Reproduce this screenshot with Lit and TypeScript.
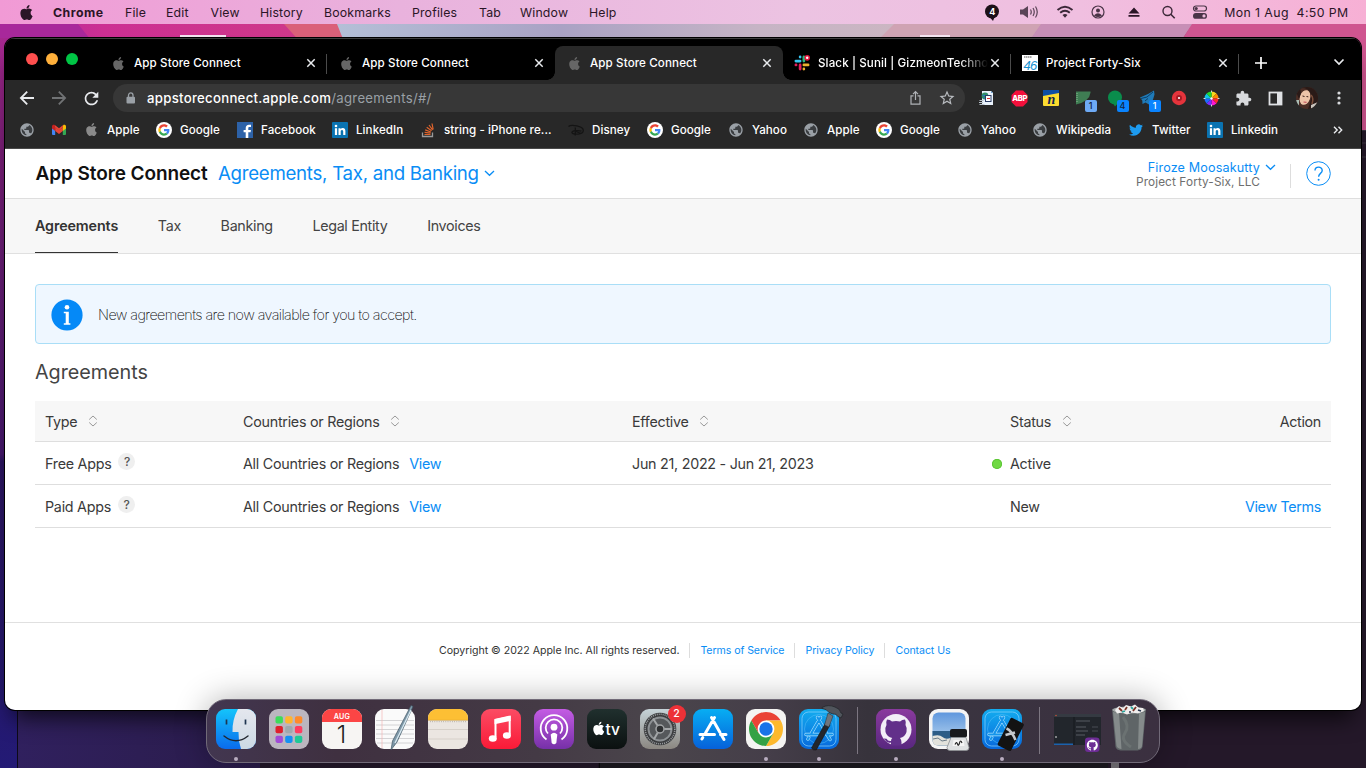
import { LitElement, html, svg, css } from "lit";
import { customElement } from "lit/decorators.js";

const APPLE = "M12.152 6.896c-.948 0-2.415-1.078-3.96-1.04-2.04.027-3.91 1.183-4.961 3.014-2.117 3.675-.546 9.103 1.519 12.09 1.013 1.454 2.208 3.09 3.792 3.039 1.52-.065 2.09-.987 3.935-.987 1.831 0 2.35.987 3.96.948 1.637-.026 2.676-1.48 3.676-2.948 1.156-1.688 1.636-3.325 1.662-3.415-.039-.013-3.182-1.221-3.22-4.857-.026-3.04 2.48-4.494 2.597-4.559-1.429-2.09-3.623-2.324-4.39-2.376-2-.156-3.675 1.09-4.61 1.09zM15.53 3.83c.843-1.012 1.4-2.427 1.245-3.83-1.207.052-2.662.805-3.532 1.818-.78.896-1.454 2.338-1.273 3.714 1.338.104 2.715-.688 3.559-1.701";
const GITHUB = "M12 .297c-6.63 0-12 5.373-12 12 0 5.303 3.438 9.8 8.205 11.385.6.113.82-.258.82-.577 0-.285-.01-1.04-.015-2.04-3.338.724-4.042-1.61-4.042-1.61C4.422 18.07 3.633 17.7 3.633 17.7c-1.087-.744.084-.729.084-.729 1.205.084 1.838 1.236 1.838 1.236 1.07 1.835 2.809 1.305 3.495.998.108-.776.417-1.305.76-1.605-2.665-.3-5.466-1.332-5.466-5.93 0-1.31.465-2.38 1.235-3.22-.135-.303-.54-1.523.105-3.176 0 0 1.005-.322 3.3 1.23.96-.267 1.98-.399 3-.405 1.02.006 2.04.138 3 .405 2.28-1.552 3.285-1.23 3.285-1.23.645 1.653.24 2.873.12 3.176.765.84 1.23 1.91 1.23 3.22 0 4.61-2.805 5.625-5.475 5.92.42.36.81 1.096.81 2.22 0 1.606-.015 2.896-.015 3.286 0 .315.21.69.825.57C20.565 22.092 24 17.592 24 12.297c0-6.627-5.373-12-12-12";
const BIRD = "M23.953 4.57a10 10 0 01-2.825.775 4.958 4.958 0 002.163-2.723c-.951.555-2.005.959-3.127 1.184a4.92 4.92 0 00-8.384 4.482C7.69 8.095 4.067 6.13 1.64 3.162a4.822 4.822 0 00-.666 2.475c0 1.71.87 3.213 2.188 4.096a4.904 4.904 0 01-2.228-.616v.06a4.923 4.923 0 003.946 4.827 4.996 4.996 0 01-2.212.085 4.936 4.936 0 004.604 3.417 9.867 9.867 0 01-6.102 2.105c-.39 0-.779-.023-1.17-.067a13.995 13.995 0 007.557 2.209c9.053 0 13.998-7.496 13.998-13.985 0-.21 0-.42-.015-.63A9.935 9.935 0 0024 4.59z";
const GLOBE = "M12 2C6.48 2 2 6.48 2 12s4.48 10 10 10 10-4.48 10-10S17.52 2 12 2zm-1 17.93c-3.95-.49-7-3.85-7-7.93 0-.62.08-1.21.21-1.79L9 15v1c0 1.1.9 2 2 2v1.93zm6.9-2.54c-.26-.81-1-1.39-1.9-1.39h-1v-3c0-.55-.45-1-1-1H8v-2h2c.55 0 1-.45 1-1V7h2c1.1 0 2-.9 2-2v-.41c2.93 1.19 5 4.06 5 7.41 0 2.08-.8 3.97-2.1 5.39z";
const STAR = "M22 9.24l-7.19-.62L12 2 9.19 8.63 2 9.24l5.46 4.73L5.82 21 12 17.27 18.18 21l-1.63-7.03L22 9.24zM12 15.4l-3.76 2.27 1-4.28-3.32-2.88 4.38-.38L12 6.1l1.71 4.04 4.38.38-3.32 2.88 1 4.28L12 15.4z";
const PUZZLE = "M20.5 11H19V7c0-1.1-.9-2-2-2h-4V3.5C13 2.12 11.88 1 10.5 1S8 2.12 8 3.5V5H4c-1.1 0-1.99.9-1.99 2v3.8H3.5c1.49 0 2.7 1.21 2.7 2.7s-1.21 2.7-2.7 2.7H2V20c0 1.1.9 2 2 2h3.8v-1.5c0-1.49 1.21-2.7 2.7-2.7 1.49 0 2.7 1.21 2.7 2.7V22H17c1.1 0 2-.9 2-2v-4h1.5c1.38 0 2.5-1.12 2.5-2.5S21.88 11 20.5 11z";
const RELOAD = "M17.65 6.35C16.2 4.9 14.21 4 12 4c-4.42 0-7.99 3.58-7.99 8s3.57 8 7.99 8c3.73 0 6.84-2.55 7.73-6h-2.08c-.82 2.33-3.04 4-5.65 4-3.31 0-6-2.69-6-6s2.69-6 6-6c1.66 0 3.14.69 4.22 1.78L13 11h7V4l-2.35 2.35z";

const icon = (size: number, box: string, body: unknown) =>
  html`<svg width=${size} height=${size} viewBox=${box}>${body}</svg>`;

const appleIcon = (fill: string, size = 14) =>
  icon(size, "0 0 24 24", svg`<path fill=${fill} d=${APPLE}></path>`);

const globeIcon = () =>
  icon(16, "0 0 24 24", svg`<circle cx="12" cy="12" r="9" fill="#3a3d40"></circle><path fill="#9aa0a6" d=${GLOBE}></path>`);

const googleIcon = () =>
  icon(16, "-10 -10 68 68", svg`
    <circle cx="24" cy="24" r="34" fill="#fff"></circle>
    <path fill="#EA4335" d="M24 9.5c3.54 0 6.71 1.22 9.21 3.6l6.85-6.85C35.9 2.38 30.47 0 24 0 14.62 0 6.51 5.38 2.56 13.22l7.98 6.19C12.43 13.72 17.74 9.5 24 9.5z"></path>
    <path fill="#4285F4" d="M46.98 24.55c0-1.57-.15-3.09-.38-4.55H24v9.02h12.94c-.58 2.96-2.26 5.48-4.78 7.18l7.73 6c4.51-4.18 7.09-10.36 7.09-17.65z"></path>
    <path fill="#FBBC05" d="M10.53 28.59c-.48-1.45-.76-2.99-.76-4.59s.27-3.14.76-4.59l-7.98-6.19C.92 16.46 0 20.12 0 24c0 3.88.92 7.54 2.56 10.78l7.97-6.19z"></path>
    <path fill="#34A853" d="M24 48c6.48 0 11.93-2.13 15.89-5.81l-7.73-6c-2.15 1.45-4.92 2.3-8.16 2.3-6.26 0-11.57-4.22-13.47-9.91l-7.98 6.19C6.51 42.62 14.62 48 24 48z"></path>`);

const gmailIcon = () =>
  icon(16, "0 0 16 16", svg`
    <path d="M1 4.5h3.2V13H2a1 1 0 0 1-1-1z" fill="#4285f4"></path>
    <path d="M11.800 4.500H15V12a1 1 0 0 1-1 1h-2.200z" fill="#34a853"></path>
    <path d="M4.200 5.300V9L8 11.900 11.800 9V5.300L8 8.200z" fill="#ea4335"></path>
    <path d="M11.800 5.300V9L15 6.500V4.400c0-1.600-1.700-2.200-2.800-1.300z" fill="#fbbc04"></path>
    <path d="M1 4.400V6.500L4.200 9V5.300l-.4-2.200C2.700 2.200 1 2.800 1 4.400z" fill="#c5221f"></path>
    <path d="M3.800 3.100L8 6.300l4.200-3.200-.4 2.200L8 8.600 4.200 5.600z" fill="#ea4335"></path>`);

const facebookIcon = () =>
  icon(16, "0 0 16 16", svg`<rect width="16" height="16" fill="#2d62a8"></rect><path fill="#fff" d="M8.700 16v-5.700H6.600V8h2.100V6.300c0-2.200 1.200-3.500 3.300-3.500h2V5h-1.400c-1 0-1.300.5-1.300 1.300V8h2.600l-.3 2.300h-2.300V16z"></path>`);

const linkedinIcon = () =>
  icon(16, "0 0 16 16", svg`<rect width="16" height="16" rx="1" fill="#0a73b1"></rect><circle cx="4" cy="4" r="1.300" fill="#fff"></circle><path fill="#fff" d="M2.900 6.200h2.200v6.900H2.900zM6.500 6.200h2.100v1c.5-.8 1.200-1.200 2.200-1.200 2 0 2.600 1.300 2.600 3.300v3.800h-2.200V9.700c0-1-.2-1.800-1.200-1.800s-1.300.8-1.300 1.800v3.400H6.500z"></path>`);

const stackIcon = () =>
  icon(16, "0 0 16 16", svg`<path d="M2.500 10.500v4h10v-4" fill="none" stroke="#9a9a9a" stroke-width="1.300"></path><path d="M4.500 12.500h6M4.600 10.300l6 .9M5.200 7.900l5.600 2.100M6.700 5.300l4.900 3.500M9 3l3.600 4.900M12 1.500l1.200 6" stroke="#e0642c" stroke-width="1.200" fill="none"></path>`);

const disneyIcon = () =>
  icon(16, "0 0 16 16", svg`<path d="M.5 4.500C3 2 15.500 4 15.300 8.500c-.2 4.500-10.500 4.500-11.300 2-.5-1.800 6-2.600 9.500-1.300M7.300 5.500v8M8 9.500l5 2" fill="none" stroke="#141414" stroke-width="1.300"></path>`);

const birdIcon = () => icon(14, "0 0 24 24", svg`<path fill="#1d9bf0" d=${BIRD}></path>`);

const slackIcon = () =>
  icon(16, "0 0 17 17", svg`
    <g stroke-width="2.900" stroke-linecap="round">
      <path d="M2 6.500h4.500M6.500 2v.2" stroke="#36c5f0"></path>
      <path d="M10.500 2v4.500" stroke="#2eb67d"></path>
      <path d="M10.500 10.500H15M10.500 15v-.2" stroke="#ecb22e"></path>
      <path d="M6.500 10.500V15M2 10.500h.2" stroke="#e01e5a"></path>
    </g>
    <circle cx="14" cy="3" r="3" fill="#e5153d"></circle><circle cx="14" cy="3" r="1.300" fill="#fff"></circle>`);

const fortySixIcon = () =>
  icon(16, "0 0 16 16", svg`<rect width="16" height="16" fill="#fff"></rect><path d="M2 2h8" stroke="#555" stroke-width="1.200" stroke-dasharray="1.500 .5"></path>
    <text x="1.500" y="14.500" font-family="Liberation Sans" font-style="italic" font-size="13" letter-spacing="-.8" fill="#1791cf">46</text>`);

const closeIcon = () =>
  icon(10, "0 0 10 10", svg`<path d="M1.300 1.300l7.400 7.400M8.700 1.300L1.300 8.700" stroke="#e8eaed" stroke-width="1.500"></path>`);

@customElement("mac-menubar")
class MacMenubar extends LitElement {
  static styles = css`
    :host { display: flex; align-items: center; height: 24px; box-sizing: border-box; padding-left: 19px;
      background: linear-gradient(90deg, #f19ad5 0, #e9b2dd 400px, #ecc3e2 800px, #f0bfe0 1080px, #f7b0d5 100%);
      font: 400 12.300px Inter, "Liberation Sans", sans-serif; color: #2a1526; }
    .menus { display: grid; grid-template-columns: 34px 72px 41px 44.500px 49.500px 64px 88px 67px 41px 69px 40px; align-items: center; white-space: nowrap; letter-spacing: 0.170px; }
    .app { font-weight: 700; letter-spacing: 0.500px; }
    .extras { margin-left: auto; display: grid; grid-template-columns: 36px 37px 34px 35.500px 35px 31.500px 28px 132px; align-items: center; padding-right: 14px; white-space: nowrap; }
    .clock { justify-self: end; margin-right: 3.500px; letter-spacing: 0.400px; }
    svg { display: block; }
    .count { font: 700 9px Inter, sans-serif; letter-spacing: 0; }
  `;
  render() {
    const names = ["File", "Edit", "View", "History", "Bookmarks", "Profiles", "Tab", "Window", "Help"];
    return html`
      <div class="menus">
        ${appleIcon("#2a1526", 15)}
        <span class="app">Chrome</span>
        ${names.map((n) => html`<span>${n}</span>`)}
      </div>
      <div class="extras">
        ${icon(18, "0 0 18 18", svg`<circle cx="9" cy="8.500" r="7" fill="#1c1019"></circle><path d="M7.500 15l2.500 3 1.600-4z" fill="#1c1019"></path><text class="count" x="6.200" y="11.700" fill="#fff">4</text>`)}
        ${icon(20, "0 0 20 20", svg`<path d="M1 7.500h3L9 4v12l-5-3.500H1z" fill="#5a4457"></path><path d="M11.500 7.500q1.500 2.500 0 5M14 6q2.500 4 0 8M16.500 4.500q3.500 5.500 0 11" fill="none" stroke="#5a4457" stroke-width="1.200"></path>`)}
        ${icon(18, "0 0 18 18", svg`<path d="M1.500 7q7.500-6.500 15 0M4.200 9.800q4.800-4 9.600 0" fill="none" stroke="#3c2839" stroke-width="1.900"></path><path d="M6.500 12q2.500-2 5 0L9 14.800z" fill="#3c2839"></path>`)}
        ${icon(16, "0 0 16 16", svg`<circle cx="8" cy="8" r="6" fill="none" stroke="#4a3447" stroke-width="1.200"></circle><circle cx="8" cy="6.500" r="2" fill="#4a3447"></circle><path d="M4 11.500q4-4.500 8 0-4 3-8 0z" fill="#4a3447"></path>`)}
        ${icon(16, "0 0 16 16", svg`<path d="M8 3.500l5.500 6h-11zM2.500 11h11v1.800h-11z" fill="#2a1526"></path>`)}
        ${icon(15, "0 0 15 15", svg`<circle cx="6.500" cy="6" r="4.500" fill="none" stroke="#3c2839" stroke-width="1.400"></circle><path d="M9.800 9.300L13.700 13.300" stroke="#3c2839" stroke-width="1.600"></path>`)}
        ${icon(16, "0 0 16 16", svg`<rect x="1.500" y="2" width="13" height="5" rx="2.500" fill="none" stroke="#4a3447" stroke-width="1.200"></rect><circle cx="4.200" cy="4.500" r="1.600" fill="#4a3447"></circle><rect x="1" y="9" width="14" height="5.800" rx="2.900" fill="#4a3447"></rect><circle cx="12" cy="11.900" r="1.600" fill="#eebbdc"></circle>`)}
        <span class="clock">Mon 1 Aug&nbsp; 4:50 PM</span>
      </div>`;
  }
}

interface Tab { title: string; icon: () => unknown; active?: boolean; line?: boolean; fade?: boolean }

@customElement("browser-chrome")
class BrowserChrome extends LitElement {
  static styles = css`
    :host { display: flex; flex-direction: column; background: #282828; color: #fff; border-bottom: 1px solid #4a4a4a; box-sizing: border-box; height: 111px;
      font: 500 11.600px Inter, "Liberation Sans", sans-serif; }
    svg { display: block; }
    .strip { display: flex; height: 42px; background: #000; align-items: flex-end; box-sizing: border-box; border-top: 1px solid #3d3d3d; }
    .lights { display: flex; gap: 8px; padding: 0 0 15px 21px; width: 72.500px; }
    .light { width: 12px; height: 12px; border-radius: 50%; }
    .red { background: #ff4f4e; } .yellow { background: #ffb03b; } .green { background: #00c545; }
    .tab { display: grid; grid-template-columns: 16px 179.500px 10px; align-items: center; justify-items: center; width: 228px; height: 34px; padding-left: 11.500px; box-sizing: border-box; position: relative; white-space: nowrap; }
    .title { justify-self: start; padding-left: 8px; letter-spacing: 0.110px; line-height: 16px; }
    .fade { -webkit-mask-image: linear-gradient(90deg, #000 150px, transparent 178px); mask-image: linear-gradient(90deg, #000 150px, transparent 178px); }
    .active { background: #282828; border-radius: 8px 8px 0 0; }
    .active::before, .active::after { content: ""; position: absolute; bottom: 0; width: 8px; height: 8px; }
    .active::before { left: -8px; background: radial-gradient(circle at 0 0, transparent 7.500px, #282828 8px); }
    .active::after { right: -8px; background: radial-gradient(circle at 100% 0, transparent 7.500px, #282828 8px); }
    .line::after { content: ""; position: absolute; right: 0; top: 8px; width: 1px; height: 20px; background: #4b4b4b; }
    .plus { padding: 0 0 11px 16px; }
    .more { margin-left: auto; padding: 0 16px 12px 0; }
    .toolbar { display: flex; align-items: center; height: 36px; padding-left: 14px; }
    .nav { display: flex; align-items: center; gap: 16px; width: 94px; }
    .omni { display: flex; align-items: center; box-sizing: border-box; width: 852px; height: 28px; padding: 0 9px 0 12px; background: #373737; border-radius: 14px; }
    .url { margin-left: 10px; font-size: 13.200px; font-weight: 500; letter-spacing: 0.280px; white-space: nowrap; }
    .path { color: #9aa0a6; font-weight: 400; }
    .omni-end { margin-left: auto; display: flex; gap: 14px; align-items: center; }
    .exts { display: grid; grid-template-columns: repeat(12, 32px); margin-left: 6px; justify-items: center; align-items: center; }
    .ext { position: relative; }
    .badge { position: absolute; left: 10px; top: 10px; width: 12px; height: 12px; border-radius: 2px; background: #0a84ff; color: #14243c; font-size: 9px; line-height: 12px; text-align: center; }
    .pale { background: #6eaaf5; } .white { color: #fff; }
    .marks { display: grid; grid-template-columns: 32px 32px 73px 81px 95px 88px 148px 79px 81px 75px 73px 81px 75px 96px 79px 1fr; height: 27px; padding-left: 14px; align-items: center; white-space: nowrap; letter-spacing: 0.060px; }
    .mark { display: grid; grid-template-columns: 16px auto; justify-content: start; column-gap: 8px; align-items: center; justify-items: center; }
    .bar { display: flex; align-items: center; }
    .chev { margin-left: auto; padding-right: 18px; }
  `;
  render() {
    const tabApple = () => appleIcon("#666", 13);
    const tabs: Tab[] = [
      { title: "App Store Connect", icon: tabApple, line: true },
      { title: "App Store Connect", icon: tabApple },
      { title: "App Store Connect", icon: tabApple, active: true },
      { title: "Slack | Sunil | GizmeonTechno", icon: slackIcon, line: true, fade: true },
      { title: "Project Forty-Six", icon: fortySixIcon, line: true },
    ];
    const marks: [() => unknown, string][] = [
      [globeIcon, ""], [gmailIcon, ""], [() => appleIcon("#8a8a8a", 13), "Apple"], [googleIcon, "Google"],
      [facebookIcon, "Facebook"], [linkedinIcon, "LinkedIn"], [stackIcon, "string - iPhone re..."],
      [disneyIcon, "Disney"], [googleIcon, "Google"], [globeIcon, "Yahoo"], [globeIcon, "Apple"],
      [googleIcon, "Google"], [globeIcon, "Yahoo"], [globeIcon, "Wikipedia"], [birdIcon, "Twitter"],
      [linkedinIcon, "Linkedin"],
    ];
    return html`
      <div class="strip">
        <div class="lights"><span class="light red"></span><span class="light yellow"></span><span class="light green"></span></div>
        ${tabs.map((t) => html`<div class="tab ${t.active ? "active" : ""} ${t.line ? "line" : ""}">${t.icon()}<span class="title ${t.fade ? "fade" : ""}">${t.title}</span>${closeIcon()}</div>`)}
        <div class="plus">${icon(12, "0 0 12 12", svg`<path d="M6 0v12M0 6h12" stroke="#fff" stroke-width="1.700"></path>`)}</div>
        <div class="more">${icon(12, "0 0 12 12", svg`<path d="M1.500 3.500L6 8l4.500-4.500" fill="none" stroke="#e8eaed" stroke-width="1.700"></path>`)}</div>
      </div>
      <div class="toolbar">
        <div class="nav">
          ${icon(16, "0 0 16 16", svg`<path d="M15 8H2M8.200 1.700L1.900 8l6.300 6.300" fill="none" stroke="#e8eaed" stroke-width="1.800"></path>`)}
          ${icon(16, "0 0 16 16", svg`<path d="M1 8h13M7.800 1.700L14.100 8l-6.300 6.300" fill="none" stroke="#707274" stroke-width="1.800"></path>`)}
          ${icon(17, "2 2 20 20", svg`<path fill="#e8eaed" d=${RELOAD}></path>`)}
        </div>
        <div class="omni">
          ${icon(12, "0 0 12 12", svg`<rect x="1.500" y="4.800" width="8.500" height="6.700" rx="1" fill="#9aa0a6"></rect><path d="M3.500 5V3.200a2.250 2.250 0 0 1 4.500 0V5" fill="none" stroke="#9aa0a6" stroke-width="1.300"></path>`)}
          <span class="url">appstoreconnect.apple.com<span class="path">/agreements/#/</span></span>
          <div class="omni-end">
            ${icon(16, "0 0 16 16", svg`<path d="M5.500 5.800H3v8.400h9V5.800H9.500M7.500 10V1.800M5 4.200l2.500-2.600L10 4.200" fill="none" stroke="#b0b3b7" stroke-width="1.200"></path>`)}
            ${icon(18, "0 0 24 24", svg`<path fill="#b8bbbf" d=${STAR}></path>`)}
          </div>
        </div>
        <div class="exts">
          ${icon(16, "0 0 16 16", svg`<path d="M3 1h9l2 2v12H3z" fill="#e9f2fb"></path><path d="M12 1l2 2h-2z" fill="#6fa3d6"></path><circle cx="6" cy="6" r="3.400" fill="#2f8f6a"></circle><path d="M3.500 5.500h3M4.500 8h3" stroke="#2871c8"></path><rect x="6.500" y="5.500" width="5.500" height="6" fill="#fff" stroke="#2c3e66"></rect><path d="M8 8.500h3" stroke="#d33"></path><path d="M.5 10.500h4M0 12.500h4M.5 14.500h5" stroke="#b9c3cc"></path>`)}
          ${icon(17, "0 0 17 17", svg`<path d="M5 .5h7L16.500 5v7L12 16.500H5L.5 12V5z" fill="#f4103c"></path><text x="1.200" y="11.400" font-size="7.600" font-weight="800" letter-spacing="-.3" fill="#fff" font-family="Inter">ABP</text>`)}
          ${icon(16, "0 0 16 16", svg`<rect width="16" height="16" rx="1" fill="#fcdc30"></rect><path d="M0 0h16v3L0 6z" fill="#0d4ea5"></path><text x="4.500" y="13.500" font-size="14" font-weight="700" font-style="italic" font-family="Liberation Serif" fill="#10234f">n</text>`)}
          <div class="ext">${icon(17, "0 0 17 17", svg`<path d="M1 1.500h14.500v1q-1 9-14.500 12z" fill="#3f7d53"></path><path d="M2 3v10" stroke="#8dba94" stroke-dasharray="1 1"></path>`)}<span class="badge pale">1</span></div>
          <div class="ext">${icon(17, "0 0 17 17", svg`<circle cx="8" cy="7.500" r="7" fill="#0a8d4c"></circle><path d="M6 13l2 3.500 3-3.500z" fill="#0a8d4c"></path>`)}<span class="badge">4</span></div>
          <div class="ext">${icon(17, "0 0 17 17", svg`<path d="M1 7.500L9 4l6-3.500.500 4-1.500 5-4 5-3.500-2-3 1.500-.2-3.500z" fill="#1f7ab8"></path><path d="M2 8.500L8 7l6-5M6 11l3-2.500" fill="none" stroke="#0d3f66"></path>`)}<span class="badge white">1</span></div>
          ${icon(16, "0 0 16 16", svg`<circle cx="8" cy="8" r="7.200" fill="#e5343c"></circle><circle cx="8" cy="8" r="3" fill="#a51c26"></circle><circle cx="8" cy="8" r="1.100" fill="#fff"></circle>`)}
          ${icon(17, "-8.500 -8.500 17 17", svg`
            ${["#f9d71c", "#ff8a00", "#ff2b2b", "#ff17d1", "#7a2bff", "#1e6cff", "#10c6e8", "#21d82e"].map((c, i) => {
              const a = (i * Math.PI) / 4 - Math.PI / 2, b = a + Math.PI / 4;
              return svg`<path fill=${c} d="M0 0L${7 * Math.cos(a)} ${7 * Math.sin(a)}A7 7 0 0 1 ${7 * Math.cos(b)} ${7 * Math.sin(b)}z"></path>`;
            })}
            <path d="M0-8v2M0 8V6M-8 0h2M8 0H6" stroke="#fff" stroke-width=".8"></path><circle r="1.200" fill="#fff"></circle>`)}
          ${icon(17, "0 0 24 24", svg`<path fill="#d8dadd" d=${PUZZLE}></path>`)}
          ${icon(15, "0 0 15 15", svg`<rect x="1.500" y="1.500" width="12" height="12" fill="none" stroke="#dfe1e4" stroke-width="1.800"></rect><rect x="9" y="1" width="5" height="13" fill="#dfe1e4"></rect>`)}
          ${icon(22, "0 0 22 22", svg`<defs><clipPath id="face"><circle cx="11" cy="11" r="11"></circle></clipPath></defs><g clip-path="url(#face)"><rect width="22" height="22" fill="#4b2d25"></rect><ellipse cx="9" cy="10.500" rx="5.200" ry="7.500" transform="rotate(18 9 10.500)" fill="#eec4a9"></ellipse><path d="M5 1q8 0 9.500 5.500L15 11l-1 5-2 6h10V0H5z" fill="#2a1a17"></path><path d="M15 8q3 3 1 9" fill="none" stroke="#7b4e3a" stroke-width="1.500"></path><path d="M0 5l4-4 1 5-2 6z" fill="#2a1a17"></path><path d="M0 13h3v9H0z" fill="#a9bdb5"></path><path d="M15 18l7-3v7h-7z" fill="#c9c4bd"></path><path d="M6.500 9l2 .5M10.500 9.500l1.800.3" stroke="#3b2018"></path><path d="M7.500 15l3 .4" stroke="#c75860" stroke-width="1.200"></path></g>`)}
          ${icon(16, "0 0 16 16", svg`<g fill="#d8dadd"><circle cx="8" cy="3" r="1.600"></circle><circle cx="8" cy="8" r="1.600"></circle><circle cx="8" cy="13" r="1.600"></circle></g>`)}
        </div>
      </div>
      <div class="marks">
        ${marks.map(([ic, label], i) =>
          i === marks.length - 1
            ? html`<div class="bar"><div class="mark">${ic()}<span>${label}</span></div><div class="chev">${icon(10, "0 0 10 10", svg`<path d="M1 1.800L4.200 5 1 8.200M5.500 1.800L8.700 5 5.500 8.200" fill="none" stroke="#e8eaed" stroke-width="1.400"></path>`)}</div></div>`
            : html`<div class="mark">${ic()}<span>${label}</span></div>`)}
      </div>`;
  }
}

const chevron = (w: number) =>
  html`<svg width=${w} height="7" viewBox="0 0 11 7"><path d="M1 1l4.500 4.300L10 1" fill="none" stroke="#0a8df5" stroke-width="1.300"></path></svg>`;

@customElement("agreements-page")
class AgreementsPage extends LitElement {
  static styles = css`
    :host { display: flex; flex-direction: column; flex: 1; background: #fff; color: #3a3a3a; font: 400 14.300px Inter, "Liberation Sans", sans-serif; white-space: nowrap; }
    svg { display: block; }
    a { color: #0a8df5; text-decoration: none; }
    .top { display: flex; align-items: center; height: 50px; box-sizing: border-box; border-bottom: 1px solid #dedede; padding: 0 30.500px 0 30.500px; }
    .brand { font-size: 19px; font-weight: 600; color: #111; letter-spacing: -0.090px; width: 182.500px; }
    .section { display: flex; align-items: center; gap: 5.500px; font-size: 18.700px; color: #0a8df5; letter-spacing: -0.290px; }
    .user { margin-left: auto; margin-top: 2px; display: grid; grid-template-columns: auto 11px; column-gap: 4.500px; align-items: center; }
    .name { color: #0a8df5; font-size: 12.600px; line-height: 14px; text-align: right; letter-spacing: 0.140px; }
    .org { color: #6e6e6e; font-size: 11.800px; line-height: 14px; letter-spacing: 0.110px; text-align: right; }
    .rule { width: 1px; height: 24px; background: #ddd; margin: 5px 15px 0 14px; }
    .tabs { display: flex; gap: 39.700px; height: 55px; box-sizing: border-box; padding-left: 30px; background: #f7f7f7; border-bottom: 1px solid #e0e0e0; }
    .tab { display: flex; align-items: center; height: 54px; box-sizing: border-box; border-bottom: 1px solid transparent; letter-spacing: -0.320px; color: #444; }
    .on { font-weight: 600; color: #333; border-color: #333; letter-spacing: -0.110px; }
    .notice { display: flex; align-items: center; gap: 15px; height: 60px; box-sizing: border-box; margin: 30px 30px 0; padding-left: 15px; border: 1px solid #a9def7; border-radius: 4px; background: #eff7ff; font-weight: 200; letter-spacing: -0.560px; color: #111; }
    .notice svg { margin-top: 1px; }
    .msg { padding-top: 1px; }
    .title { margin: 15px 30px 0; height: 42px; line-height: 27px; font-size: 19.800px; color: #444; letter-spacing: -0.030px; }
    .table { margin: 0 30px; letter-spacing: -0.260px; }
    .row { display: grid; grid-template-columns: 198px 389px 378px 1fr; align-items: center; height: 43px; box-sizing: border-box; border-bottom: 1px solid #dedede; padding: 0 10px; }
    .head { height: 41px; background: #f7f7f7; }
    .cell { display: flex; align-items: center; }
    .sort { margin-left: 10.500px; }
    .view { margin-left: 10px; }
    .end { margin-left: auto; letter-spacing: -0.320px; }
    .q { width: 17px; height: 17px; margin: -3px 0 0 7px; border-radius: 50%; background: #efefef; font-size: 12px; font-weight: 500; line-height: 17.500px; text-align: center; color: #555; }
    .dot { width: 10px; height: 10px; border-radius: 50%; background: #70d944; box-shadow: inset 0 0 0 1px #5cc536; margin: 2px 8px 0 -18px; }
    .foot { display: flex; justify-content: center; align-items: center; margin-top: 94px; border-top: 1px solid #e0e0e0; height: 55px; font-size: 10.600px; line-height: 15px; color: #333; letter-spacing: -0.020px; box-sizing: border-box; padding-left: 23.500px; }
    .foot a { border-left: 1px solid #ddd; margin-left: 10px; padding-left: 10px; letter-spacing: -0.080px; }
  `;
  render() {
    const sort = html`<svg class="sort" width="10" height="12" viewBox="0 0 10 12"><path d="M1.200 4.500L5 1l3.800 3.500M1.200 7.500L5 11l3.800-3.500" fill="none" stroke="#999" stroke-width="1"></path></svg>`;
    const rows = [
      { type: "Free Apps", effective: "Jun 21, 2022 - Jun 21, 2023", status: "Active", live: true, action: "" },
      { type: "Paid Apps", effective: "", status: "New", live: false, action: "View Terms" },
    ];
    return html`
      <div class="top">
        <span class="brand">App Store Connect</span>
        <span class="section">Agreements, Tax, and Banking ${chevron(11)}</span>
        <div class="user"><span class="name">Firoze Moosakutty</span>${chevron(11)}<span class="org">Project Forty-Six, LLC</span></div>
        <span class="rule"></span>
        <svg width="25" height="25" viewBox="0 0 25 25"><circle cx="12.500" cy="12.500" r="11.800" fill="none" stroke="#0a8df5" stroke-width="1"></circle><path d="M9 9.600c0-4.600 7.200-4.500 7.200-.2 0 3-3.600 3-3.600 6.300" fill="none" stroke="#0a8df5" stroke-width="1.400"></path><circle cx="12.600" cy="18.800" r="1" fill="#0a8df5"></circle></svg>
      </div>
      <div class="tabs">
        <span class="tab on">Agreements</span>${["Tax", "Banking", "Legal Entity", "Invoices"].map((t) => html`<span class="tab">${t}</span>`)}
      </div>
      <div class="notice">
        <svg width="32" height="32" viewBox="0 0 32 32"><circle cx="16" cy="16" r="15.600" fill="#0589f7"></circle><circle cx="16" cy="8.300" r="2.300" fill="#fff"></circle><path d="M12.800 12.700h5v11.600h1.600v1.500h-6.600v-1.500h1.900v-10h-1.900z" fill="#fff"></path></svg>
        <span class="msg">New agreements are now available for you to accept.</span>
      </div>
      <div class="title">Agreements</div>
      <div class="table">
        <div class="row head">
          <div class="cell">Type ${sort}</div>
          <div class="cell">Countries or Regions ${sort}</div>
          <div class="cell">Effective ${sort}</div>
          <div class="cell">Status ${sort}<span class="end">Action</span></div>
        </div>
        ${rows.map((r) => html`
          <div class="row">
            <div class="cell">${r.type}<span class="q">?</span></div>
            <div class="cell">All Countries or Regions<a class="view">View</a></div>
            <div class="cell">${r.effective}</div>
            <div class="cell">${r.live ? html`<span class="dot"></span>` : ""}${r.status}<a class="end">${r.action}</a></div>
          </div>`)}
      </div>
      <div class="foot"><span>Copyright © 2022 Apple Inc. All rights reserved.</span><a>Terms of Service</a><a>Privacy Policy</a><a>Contact Us</a></div>`;
  }
}

const tile = (fill: string) => svg`<rect x="0" y="0" width="40" height="40" rx="9" fill=${fill}></rect>`;

const storeMark = (stroke: string, w: number) =>
  svg`<path d="M21.500 8.500L12.500 24M9.800 28.500l-.9 1.500M18.500 8.500L27 23.500M28.800 26.800l2.200 3.700M7 25.500h14.500M27.500 25.500H33" fill="none" stroke=${stroke} stroke-width=${w} stroke-linecap="round"></path>`;

const blueprint = () => svg`${tile("url(#blue)")}
  <rect x="3" y="3" width="34" height="34" rx="6.500" fill="none" stroke="#8cd3fb" stroke-width=".7"></rect>
  <circle cx="20" cy="20" r="14.500" fill="none" stroke="#5cc0f8" stroke-width=".5"></circle>
  ${storeMark("#a9e0ff", 3.4)}${storeMark("#1594ea", 2.2)}`;

const dockIcons: Record<string, () => unknown> = {
  finder: () => svg`<defs><clipPath id="r"><rect width="40" height="40" rx="9"></rect></clipPath></defs>
    <g clip-path="url(#r)"><rect width="40" height="40" fill="url(#sky)"></rect><path d="M22 0q-6 11-5.500 23h6q-.3 9 2.500 17H40V0z" fill="url(#pearl)"></path></g>
    <path d="M10.500 10.500v5M29.500 10.500v5" stroke="#1d3550" stroke-width="1.700"></path><path d="M8 27q12 9.500 24 0" fill="none" stroke="#22262e" stroke-width="1.400" stroke-linecap="round"></path>`,
  launchpad: () => svg`${tile("#bbb6bf")}${["#3ddc5a", "#ffb52e", "#ff8a2b", "#e01f2d", "#9fa8ad", "#ff3c5f", "#a14bd6", "#1591f2", "#20c997"].map(
    (c, i) => svg`<rect x=${6.5 + (i % 3) * 9.7} y=${7.300 + Math.floor(i / 3) * 9.700} width="7.400" height="7.200" rx="1.800" fill=${c}></rect>`)}`,
  calendar: () => svg`${tile("#f7f5f3")}<path d="M0 13V9a9 9 0 0 1 9-9h22a9 9 0 0 1 9 9v4z" fill="#fc4545"></path>
    <text x="20" y="9.800" text-anchor="middle" class="aug">AUG</text><text x="19.500" y="34" text-anchor="middle" class="day">1</text>`,
  textedit: () => svg`${tile("#fafafa")}<path d="M1 11.500h38M1 16h38M1 20.500h38M1 25h38M1 29.500h38M2 34h36" stroke="#c9c9cc" stroke-width=".8"></path><path d="M7 1v38" stroke="#f3b4b4" stroke-width=".7"></path>
    <path d="M36-3.500l2 1L22 33l-6 8 1.500-9z" fill="#7e98a8" stroke="#3f5563" stroke-width=".7"></path><path d="M36 1L20 34" stroke="#d8e8f0" stroke-width="1.300"></path>`,
  notes: () => svg`${tile("#ebe6e1")}<path d="M0 11V9a9 9 0 0 1 9-9h22a9 9 0 0 1 9 9v2z" fill="#fdbf34"></path><path d="M0 11.300h40" stroke="#d09a2a" stroke-width=".6"></path><path d="M2 12.700h36" stroke="#9d968c" stroke-width=".8" stroke-dasharray=".8 1.400"></path><path d="M0 20.500h40M0 30h40" stroke="#d0cac3" stroke-width=".8"></path>`,
  music: () => svg`${tile("url(#rose)")}<path d="M14.500 28V10.700L28.700 7.700v17.800" fill="none" stroke="#fff" stroke-width="2"></path><path d="M13.500 10.300l16.200-3.400v5L13.500 15.300z" fill="#fff"></path><ellipse cx="11.800" cy="29.500" rx="4" ry="3.200" fill="#fff"></ellipse><ellipse cx="25.900" cy="26.500" rx="4" ry="3.200" fill="#fff"></ellipse>`,
  podcasts: () => svg`${tile("url(#violet)")}<g fill="none" stroke="#fff" stroke-width="1.800"><path d="M12.500 30.500a13.300 13.300 0 1 1 15 0"></path><path d="M14 24.500a8.300 8.300 0 1 1 12 0"></path></g><circle cx="20" cy="18.200" r="3.400" fill="#fff"></circle><path d="M16.700 25.500q3.300-3.500 6.600 0l-1 8.500q-2.300 2.500-4.600 0z" fill="#fff"></path>`,
  tv: () => svg`${tile("url(#coal)")}<path d=${APPLE} transform="translate(5 12.700) scale(.56)" fill="#fff"></path><text x="18.400" y="26" class="tv">tv</text>`,
  prefs: () => svg`${tile("url(#steel)")}<circle cx="20" cy="20" r="16.300" fill="#3b3d3f"></circle><circle cx="20" cy="20" r="14.800" fill="none" stroke="#9a9da0" stroke-width="1.600" stroke-dasharray="1 1"></circle><circle cx="20" cy="20" r="11.500" fill="#55585b" stroke="#8d9194" stroke-width="2"></circle><circle cx="20" cy="20" r="4" fill="#2e3032" stroke="#a3a6a8" stroke-width="1.500"></circle><path d="M17.500 16.500L13 9.500M24.300 20H32M17.800 23.500l-4 7" stroke="#a3a6a8" stroke-width="2"></path>`,
  appstore: () => svg`${tile("url(#store)")}${storeMark("#fff", 3)}`,
  chrome: () => svg`${tile("#f4f4f2")}<g transform="translate(20 20)"><path d="M-14.700-8.500A17 17 0 0 1 14.700-8.500H0L-7.360 4.250z" fill="#ea4335"></path><path d="M14.700-8.500A17 17 0 0 1 0 17L7.360 4.250 0-8.500z" fill="#fdb92d"></path><path d="M0 17A17 17 0 0 1-14.700-8.500L-7.360 4.250H7.360z" fill="#34a245"></path><circle r="8.400" fill="#fff"></circle><circle r="6.700" fill="#1a73e8"></circle></g>`,
  xcode: () => svg`${blueprint()}<path d="M26.500 14L12.500 39q1.500 2.500 4.700 2L31 16z" fill="#23262b" stroke="#111" stroke-width=".6"></path><path d="M29 4l-3.500 12 4.500 2L34 7z" fill="#6f757c" stroke="#2a2d31" stroke-width=".5"></path><path d="M23-1.500q6-3.500 13-.5 5 1.500 6 6l2 1-2 4-3-1.500q-2-3-5-2.500l-4-1.500Q28 0 23-.5z" fill="#50555c" stroke="#1f2226" stroke-width=".7"></path>`,
  github: () => svg`${tile("url(#plum)")}<circle cx="20" cy="20.500" r="15.500" fill="#f2eef7"></circle><path transform="translate(20 20.500)" d="M-9-10q3 0 5 2 4-1 8 0 2-2 5-2 1.500 3 .5 5.500 2 3 1 7Q9 7.500 4 8.500 5.500 10 5.500 13v3H-5V13q-4 1-6-2.500l-1.500-1.500 3 .3q1.500 2.800 4.500 2.200 0-2 1.300-3Q-9 7.500-10.500 2.500q-1-4 1-7Q-10.500-7-9-10z" fill="#62308a"></path>`,
  preview: () => svg`<rect width="40" height="40" rx="9" fill="#f4f4f4"></rect><rect x="3.500" y="3.500" width="33" height="33" rx="6" fill="url(#day)"></rect><path d="M3.500 22h33v8q0 6.500-6 6.500H9.500q-6 0-6-6.500z" fill="#2c5c86"></path><path d="M3.500 27q7-2 10 1t8 1v7.500H9.500q-6 0-6-6z" fill="#e2e2dc"></path><path d="M4 30l5-1 4 3 5-1" stroke="#6c7c88" fill="none"></path><rect x="21" y="20" width="17" height="8.500" rx="2" fill="#17191c"></rect><path d="M22 28.500h15l3 10q0 3-3 3H21q-3 0-3-3z" fill="#dfe1e2" stroke="#8b8f92" stroke-width=".8"></path><path d="M24.500 31h10l1 6h-12z" fill="#f5f5f5"></path><path d="M26 35.500q1.500-3.500 2.500-.5t2-1 2.500 0" fill="none" stroke="#222" stroke-width="1.100"></path>`,
  simulator: () => svg`${blueprint()}<rect x="21.500" y="10" width="15" height="31" rx="2" transform="rotate(27 29 25)" fill="#131313"></rect><path d="M24.500 19.500q5 2 9 11.500M33 23.500l-9.500 2.500" fill="none" stroke="#c4c8cc" stroke-width="2.600"></path>`,
};

@customElement("mac-dock")
class MacDock extends LitElement {
  static styles = css`
    :host { display: flex; align-items: flex-start; box-sizing: border-box; width: 954px; height: 64px; padding: 8.500px 0 0 8.500px; border: 1px solid #716a78; border-radius: 20px;
      background: linear-gradient(90deg, #423650 0, #3f3040 130px, #443a45 330px, #4a454b 450px, #453e49 560px, #37333c 660px, #3a3440 750px, #3b3040 100%); box-shadow: 0 0 32px rgba(0,0,0,.3); }
    svg { display: block; overflow: visible; }
    .app { position: relative; display: flex; flex-direction: column; align-items: center; width: 40px; margin-right: 13px; }
    .run { width: 4px; height: 4px; border-radius: 50%; background: #b9adc0; margin-top: 8.500px; }
    .count { position: absolute; left: 28px; top: -4px; width: 18px; height: 18px; border-radius: 50%; background: #ed3137; color: #fff; font: 500 10.500px/18px Inter, sans-serif; text-align: center; }
    .bar { width: 1px; height: 47px; background: #7c7681; margin: -2px 18px 0 5px; }
    .bar.last { margin-left: 4.500px; margin-right: 14px; }
    .mini { margin: 5px 8.500px 0 0; }
    .aug { font: 600 7.200px Inter, sans-serif; fill: #fff; letter-spacing: .2px; }
    .day { font: 300 24px Inter, sans-serif; fill: #222; }
    .tv { font: 500 15.500px Inter, sans-serif; fill: #fff; }
  `;
  render() {
    const grad = (id: string, a: string, b: string) =>
      svg`<linearGradient id=${id} x1="0" y1="0" x2="0" y2="1"><stop offset="0" stop-color=${a}></stop><stop offset="1" stop-color=${b}></stop></linearGradient>`;
    const running = ["finder", "chrome", "xcode", "github", "simulator"];
    const app = (name: string) => html`
      <div class="app"><svg width="40" height="40" viewBox="0 0 40 40">${dockIcons[name]()}</svg>
        ${running.includes(name) ? html`<span class="run"></span>` : ""}${name === "prefs" ? html`<span class="count">2</span>` : ""}</div>`;
    return html`
      <svg width="0" height="0"><defs>
        ${grad("sky", "#14c4fb", "#0a6bec")}${grad("pearl", "#e4e7ee", "#ccd9e4")}${grad("rose", "#fb4c64", "#fa1a37")}
        ${grad("violet", "#c45ce4", "#7630a8")}${grad("coal", "#20302e", "#0b1010")}${grad("steel", "#c6d3d8", "#8b8781")}
        ${grad("store", "#07aef3", "#0661da")}${grad("blue", "#13adef", "#0768dc")}${grad("plum", "#8a3a9e", "#58277f")}${grad("day", "#5f97dd", "#bfdaf0")}
      </defs></svg>
      ${["finder", "launchpad", "calendar", "textedit", "notes", "music", "podcasts", "tv", "prefs", "appstore", "chrome", "xcode"].map(app)}
      <span class="bar"></span>
      ${["github", "preview", "simulator"].map(app)}
      <span class="bar last"></span>
      <svg class="mini" width="48" height="40" viewBox="0 0 48 40">
        <rect width="47" height="31" fill="#22262c"></rect><path d="M0 1.500h47" stroke="#353a42" stroke-width="3"></path><circle cx="2" cy="1.500" r=".7" fill="#e5533c"></circle><path d="M20 3v28" stroke="#15181c"></path>
        <path d="M22 7h14M22 13h10M22 17h12M22 21h9" stroke="#646a72" stroke-width=".8"></path><path d="M38 13h6M38 17h6" stroke="#5a6068" stroke-width=".7"></path><path d="M1 23h2" stroke="#ddd" stroke-width="1.200"></path><rect y="29.500" width="19" height="1.500" fill="#1b62ad"></rect>
        <rect x="31" y="23.500" width="14.500" height="14.500" rx="3.300" fill="#6d2d95"></rect><path d=${GITHUB} transform="translate(32.800 25.500) scale(.46)" fill="#fff"></path>
      </svg>
      <svg width="36" height="48" viewBox="1 0 36 48">
        <path d="M2 0q17-5 34 0l-3.500 38q-1 3-5 3.500h-17q-4-.5-5-3.500z" fill="#5f6567"></path>
        <path d="M3 3l3.500 34q1 2.500 5 3L9 4zM29 4l-1 36q3.500-.5 4-3L35 3z" fill="#858b8b"></path>
        <path d="M13 8q7 9 2 16t6 14" fill="none" stroke="#6b7272" stroke-width="3"></path>
        <ellipse cx="19" cy="1" rx="16.500" ry="3.500" fill="#a4a8a8"></ellipse>
        <path d="M5 1l4-4 4 2 3-3 5 1.500 4-2 4 3.500 4 0 1 3-6 2.500-6-1-5 2-5-2-5 1z" fill="#f0eeee"></path>
        <path d="M9-1l3 3M17-2l-2 3M26-2l-3 4" stroke="#7a3326" stroke-width="1.800"></path><path d="M12 3l3-1M21-2l2 2" stroke="#2aa39a" stroke-width="1.800"></path><path d="M28 1l3 1M19 3h2" stroke="#27364e" stroke-width="1.600"></path>
      </svg>`;
  }
}

@customElement("app-root")
class AppRoot extends LitElement {
  static styles = css`
    :host { display: block; position: relative; width: 1366px; height: 768px; overflow: hidden; background: #241829; }
    .wall { position: absolute; left: 0; top: 0; display: block; }
    .menubar { position: relative; }
    .window { position: absolute; left: 5px; top: 38px; width: 1356px; height: 672px; display: flex; flex-direction: column; border-radius: 10px; overflow: hidden; }
    .shade { position: absolute; left: 5px; top: 38px; width: 1356px; height: 672px; border-radius: 10px; box-shadow: 0 0 0 1px #000, 0 16px 22px -8px rgba(0,0,0,.7); }
    .dock { position: absolute; left: 206px; top: 699px; }
  `;
  render() {
    return html`
      <svg class="wall" width="1366" height="768" viewBox="0 0 1366 768">
        <defs>
          <linearGradient id="t"><stop offset="0" stop-color="#ac2a9c"></stop><stop offset=".3" stop-color="#cc2f93"></stop><stop offset="1" stop-color="#cf3a87"></stop></linearGradient>
          <linearGradient id="m"><stop offset="0" stop-color="#b4bfd7"></stop><stop offset=".4" stop-color="#aaa2c4"></stop><stop offset=".75" stop-color="#c6b4c5"></stop><stop offset="1" stop-color="#cbb6c2"></stop></linearGradient>
          <linearGradient id="l" x1="0" y1="0" x2="0" y2="1"><stop offset="0" stop-color="#a6288f"></stop><stop offset=".15" stop-color="#7a1f77"></stop><stop offset=".57" stop-color="#46186c"></stop><stop offset=".58" stop-color="#2c1560"></stop><stop offset="1" stop-color="#231a75"></stop></linearGradient>
          <linearGradient id="b"><stop offset="0" stop-color="#30205e"></stop><stop offset="1" stop-color="#2a1c4a"></stop></linearGradient>
        </defs>
        <rect y="24" width="345" height="20" fill="url(#t)"></rect>
        <path d="M0 24h78l16 20H0z" fill="#a8289b"></path>
        <path d="M284 24h56l8 20h-46z" fill="#da6079"></path>
        <path d="M337 24h560l-20 20H345z" fill="url(#m)"></path>
        <path d="M894 24h148l-14 20H874z" fill="#cfa3b3"></path>
        <path d="M1041 24h152l-14 20h-152z" fill="#c78fb6"></path>
        <path d="M1192 24h174v106h-187V44z" fill="#cf5590"></path>
        <path d="M180 36h46M920 36h30" stroke="#f3e4f0" stroke-width="2"></path>
        <rect y="38" width="17" height="730" fill="url(#l)"></rect>
        <rect x="17" y="700" width="243" height="68" fill="url(#b)"></rect><path d="M17.500 705v63" stroke="#0d0a18"></path>
        <rect x="260" y="700" width="340" height="68" fill="#231829"></rect><path d="M599.500 760v8" stroke="#09080b" stroke-width="1.500"></path>
        <rect x="600" y="700" width="508" height="68" fill="#1c1a20"></rect><rect x="1111" y="755" width="8" height="13" fill="#777379"></rect>
        <path d="M1361 130.500h5M1361 143h5M1361 157h5" stroke="#3b3540"></path>
      </svg>
      <mac-menubar class="menubar"></mac-menubar>
      <div class="shade"></div>
      <div class="window"><browser-chrome></browser-chrome><agreements-page></agreements-page></div>
      <mac-dock class="dock"></mac-dock>`;
  }
}
